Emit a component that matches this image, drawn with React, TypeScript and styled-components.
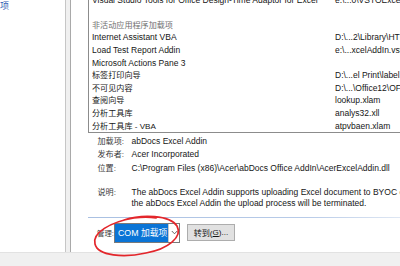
import styled, { createGlobalStyle } from "styled-components";

const Global = createGlobalStyle`
  html, body {
    margin: 0;
    padding: 0;
    background: #fff;
  }
  body {
    font-family: "Liberation Sans", "Noto Sans CJK SC", sans-serif;
    font-size: 8.5px;
    color: #161616;
  }
`;

const Window = styled.div`
  position: relative;
  width: 400px;
  height: 266px;
  overflow: hidden;
  display: flex;
  flex-direction: column;
`;

const Main = styled.div`
  display: flex;
  height: 252px;
  flex: none;
`;

const Nav = styled.div`
  width: 65px;
  flex: none;
  border-right: 1px solid #c6c6c6;
  overflow: hidden;
  padding-top: 1px;
`;

const NavItem = styled.div`
  color: #2f5db4;
  white-space: nowrap;
  margin-left: -18px;
  line-height: 11px;
  font-size: 9px;
`;

const Gutter = styled.div`
  width: 4px;
  flex: none;
  background: #f0f0f0;
  border-right: 1px solid #a9a9a9;
`;

const Content = styled.div`
  flex: 1;
  min-width: 0;
  overflow: hidden;
  padding-left: 17px;
  display: flex;
  flex-direction: column;
`;

const ListBox = styled.div`
  width: 420px;
  flex: none;
  margin-top: -6.3px;
  border-left: 1px solid #8c8c8c;
  border-bottom: 1px solid #8c8c8c;
  padding-left: 3px;
`;

const Row = styled.div`
  display: grid;
  grid-template-columns: 243px 1fr;
  height: 12.6px;
  line-height: 12.6px;
  white-space: nowrap;
  overflow: hidden;
`;

const Name = styled.span<{ $muted?: boolean }>`
  color: ${({ $muted }) => ($muted ? "#707070" : "#161616")};
  overflow: hidden;
`;

const Cjk = styled.span`
  font-size: 8.1px;
`;

const Details = styled.div`
  display: grid;
  grid-template-columns: 34px 1fr;
  margin: 1.7px 0 0 9.5px;
  line-height: 13.4px;
  white-space: nowrap;
`;

const Label = styled.span`
  color: #3a3a3a;
  font-size: 8.1px;
`;

const Desc = styled.div`
  display: grid;
  grid-template-columns: 34px 1fr;
  margin: 11.5px 0 0 9.5px;
  line-height: 11.6px;
  white-space: nowrap;
`;

const Separator = styled.div`
  height: 1px;
  margin-top: 6.8px;
  background: linear-gradient(to right, #a9c0e2 0%, #b8cbe8 70%, #dfe7f3 100%);
  flex: none;
`;

const ManageRow = styled.div`
  display: flex;
  align-items: center;
  margin: 5.5px 0 0 9px;
  height: 19.5px;
`;

const ManageLabel = styled.span`
  width: 17px;
  flex: none;
  color: #3a3a3a;
  font-size: 7.4px;
  white-space: nowrap;
`;

const Select = styled.div`
  display: flex;
  align-items: stretch;
  height: 19.5px;
  width: 66px;
  flex: none;
  box-sizing: border-box;
  border: 1px solid #7a7a7a;
  background: #fff;
`;

const SelectValue = styled.div`
  flex: 1;
  background: #0a74d6;
  color: #fff;
  display: flex;
  align-items: center;
  padding-left: 3px;
  white-space: nowrap;
  font-size: 8.8px;
`;

const SelectArrow = styled.div`
  width: 10px;
  display: flex;
  align-items: center;
  justify-content: center;
  border-left: 1px solid #c8c8c8;
`;

const GoButton = styled.div`
  margin-left: 7px;
  height: 17px;
  width: 48px;
  flex: none;
  box-sizing: border-box;
  border: 1px solid #adadad;
  background: #e1e1e1;
  display: flex;
  align-items: center;
  justify-content: center;
  white-space: nowrap;
  font-size: 8.1px;
`;

const Footer = styled.div`
  flex: 1;
  background: #f0f0f0;
  border-top: 1px solid #e2e2e2;
`;

const Circle = styled.svg`
  position: absolute;
  left: 90px;
  top: 211px;
  overflow: visible;
`;

type Item = { name: string; path: string; cjk?: boolean; muted?: boolean };

const items: Item[] = [
  { name: "Visual Studio Tools for Office Design-Time Adaptor for Excel", path: "e:\\...0\\VSTOExcelAdaptor.dll" },
  { name: "", path: "" },
  { name: "非活动应用程序加载项", path: "", cjk: true, muted: true },
  { name: "Internet Assistant VBA", path: "D:\\...2\\Library\\HTML.xlam" },
  { name: "Load Test Report Addin", path: "e:\\...xcelAddIn.vsto" },
  { name: "Microsoft Actions Pane 3", path: "" },
  { name: "标签打印向导", path: "D:\\...el Print\\label.xlam", cjk: true },
  { name: "不可见内容", path: "D:\\...\\Office12\\OFFRHD.DLL", cjk: true },
  { name: "查阅向导", path: "lookup.xlam", cjk: true },
  { name: "分析工具库", path: "analys32.xll", cjk: true },
  { name: "分析工具库 - VBA", path: "atpvbaen.xlam", cjk: true },
];

const Chevron = () => (
  <svg width="7" height="5" viewBox="0 0 7 5">
    <path d="M0.8 1 L3.5 3.8 L6.2 1" fill="none" stroke="#555" strokeWidth="0.9" />
  </svg>
);

export default function App() {
  return (
    <Window>
      <Global />
      <Main>
        <Nav>
          <NavItem>加载项</NavItem>
        </Nav>
        <Gutter />
        <Content>
          <ListBox>
            {items.map((it, i) => (
              <Row key={i}>
                <Name $muted={it.muted}>
                  {it.cjk ? <Cjk>{it.name}</Cjk> : it.name}
                </Name>
                <span>{it.path}</span>
              </Row>
            ))}
          </ListBox>
          <Details>
            <Label>加载项:</Label>
            <span>abDocs Excel Addin</span>
            <Label>发布者:</Label>
            <span>Acer Incorporated</span>
            <Label>位置:</Label>
            <span>C:\Program Files (x86)\Acer\abDocs Office AddIn\AcerExcelAddin.dll</span>
          </Details>
          <Desc>
            <Label>说明:</Label>
            <span>The abDocs Excel Addin supports uploading Excel document to BYOC cloud.</span>
            <span />
            <span>the abDocs Excel Addin the upload process will be terminated.</span>
          </Desc>
          <Separator />
          <ManageRow>
            <ManageLabel>管理:</ManageLabel>
            <Select>
              <SelectValue>COM 加载项</SelectValue>
              <SelectArrow>
                <Chevron />
              </SelectArrow>
            </Select>
            <GoButton>
              转到(<u>G</u>)...
            </GoButton>
          </ManageRow>
        </Content>
      </Main>
      <Footer />
      <Circle width="96" height="50" viewBox="0 0 96 50">
        <path
          d="M34 9 C52 3 80 4 87 15 C93 26 78 38 56 42 C34 47 8 45 5 33 C2 22 20 11 44 7 C52 6 60 6 66 7"
          fill="none"
          stroke="#e3262b"
          strokeWidth="1.7"
          strokeLinecap="round"
        />
      </Circle>
    </Window>
  );
}
